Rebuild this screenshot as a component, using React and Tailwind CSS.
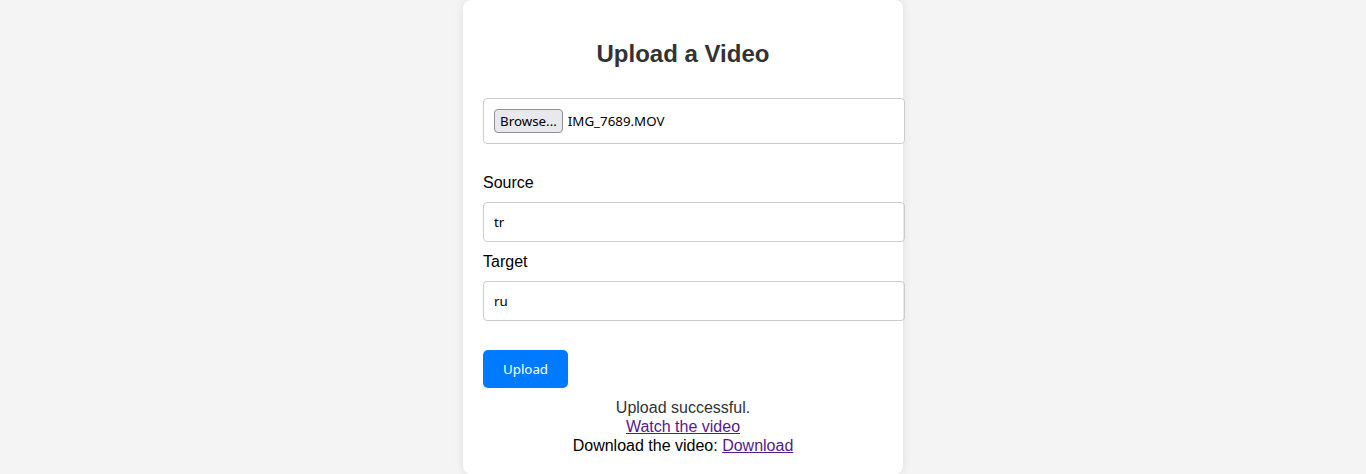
export default function App() {
  return (
    <div className="min-h-screen bg-[#f4f4f4] flex justify-center font-['Liberation_Sans',Arial,sans-serif]">
      <div className="w-[440px] h-[474px] bg-white rounded-lg shadow-[0_0_10px_rgba(0,0,0,0.1)] p-5">
        <h2 className="mt-5 mb-[30px] text-2xl leading-[28px] font-bold text-[#333] text-center">
          Upload a Video
        </h2>

        <form>
          {/* File picker */}
          <div className="w-[422px] h-[46px] border border-[#ccc] rounded bg-white px-2.5 flex items-center gap-[5px] font-['Noto_Sans',sans-serif] text-[13.33px] text-black">
            <span className="h-6 px-[5px] pt-px flex items-center bg-[#e9e9ed] border border-[#8f8f9d] rounded">
              Browse...
            </span>
            <span className="pt-px">IMG_7689.MOV</span>
          </div>

          <label className="block mt-[30px] text-base leading-[18.4px] text-black">Source</label>
          <input
            type="text"
            defaultValue="tr"
            className="block mt-[9.6px] w-[422px] h-10 px-2.5 border border-[#ccc] rounded font-['Noto_Sans',sans-serif] text-[13.33px] text-black outline-none"
          />

          <label className="block mt-[11px] text-base leading-[18.4px] text-black">Target</label>
          <input
            type="text"
            defaultValue="ru"
            className="block mt-[9.6px] w-[422px] h-10 px-2.5 border border-[#ccc] rounded font-['Noto_Sans',sans-serif] text-[13.33px] text-black outline-none"
          />

          <button
            type="submit"
            className="mt-[29px] w-[85px] h-[38px] pt-px bg-[#007bff] text-white rounded-[5px] font-['Noto_Sans',sans-serif] text-[13.33px]"
          >
            Upload
          </button>
        </form>

        <div className="mt-[9.5px] text-center text-base leading-[19px]">
          <p className="text-[#333]">Upload successful.</p>
          <a href="#" className="text-[#551a8b] underline">Watch the video</a>
          <p className="text-black">
            Download the video: <a href="#" className="text-[#551a8b] underline">Download</a>
          </p>
        </div>
      </div>
    </div>
  );
}
